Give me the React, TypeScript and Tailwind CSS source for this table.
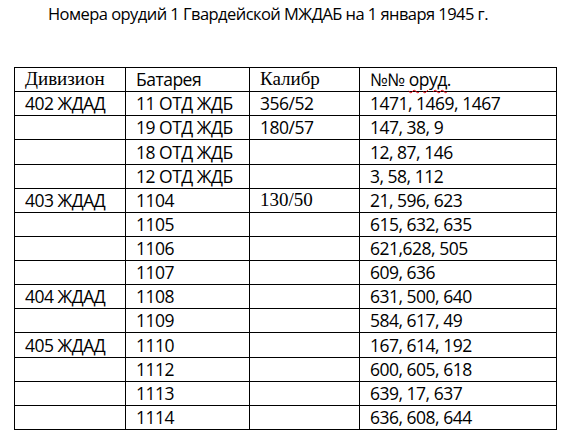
import React from "react";

type Row = [string, string, string, string, boolean?];

const rows: Row[] = [
  ["402 ЖДАД", "11 ОТД ЖДБ", "356/52", "1471, 1469, 1467"],
  ["", "19 ОТД ЖДБ", "180/57", "147, 38, 9"],
  ["", "18 ОТД ЖДБ", "", "12, 87, 146"],
  ["", "12 ОТД ЖДБ", "", "3, 58, 112"],
  ["403 ЖДАД", "1104", "130/50", "21, 596, 623", true],
  ["", "1105", "", "615, 632, 635"],
  ["", "1106", "", "621,628, 505"],
  ["", "1107", "", "609, 636"],
  ["404 ЖДАД", "1108", "", "631, 500, 640"],
  ["", "1109", "", "584, 617, 49"],
  ["405 ЖДАД", "1110", "", "167, 614, 192"],
  ["", "1112", "", "600, 605, 618"],
  ["", "1113", "", "639, 17, 637"],
  ["", "1114", "", "636, 608, 644"],
];

const sans = "font-['Open_Sans',sans-serif] text-[17.5px] tracking-[-0.5px]";
const serif = "font-['Liberation_Serif',serif] text-[19px]";

function Cell({ w, children, cls }: { w: string; children?: React.ReactNode; cls: string }) {
  return (
    <div className={`${w} shrink-0 border-r border-black h-full flex items-end pl-[10px] pb-[1px] leading-[22px] whitespace-nowrap ${cls}`}>
      {children}
    </div>
  );
}

export default function App() {
  return (
    <div className="w-[567px] h-[439px] bg-white text-black overflow-hidden">
      <div className="pl-[48px] pt-[2px] h-[67px] font-['Open_Sans',sans-serif] text-[16.5px] tracking-[-0.55px] whitespace-nowrap">
        Номера орудий 1 Гвардейской МЖДАБ на 1 января 1945 г.
      </div>
      <div className="ml-[14px] w-[543px] border-l border-t border-black">
        <div className="flex h-[24.13px] border-b border-black">
          <Cell w="w-[111px]" cls={serif}>Дивизион</Cell>
          <Cell w="w-[124px]" cls={sans}>Батарея</Cell>
          <Cell w="w-[110px]" cls={serif}>Калибр</Cell>
          <Cell w="w-[197px]" cls={sans}>
            №№&nbsp;
            <span className="underline decoration-wavy decoration-red-600 decoration-[1px] underline-offset-[3px]">оруд</span>.
          </Cell>
        </div>
        {rows.map((r, i) => (
          <div key={i} className="flex h-[24.13px] border-b border-black">
            <Cell w="w-[111px]" cls={sans}>{r[0]}</Cell>
            <Cell w="w-[124px]" cls={sans}>{r[1]}</Cell>
            <Cell w="w-[110px]" cls={r[4] ? serif : sans}>{r[2]}</Cell>
            <Cell w="w-[197px]" cls={sans}>{r[3]}</Cell>
          </div>
        ))}
      </div>
    </div>
  );
}
